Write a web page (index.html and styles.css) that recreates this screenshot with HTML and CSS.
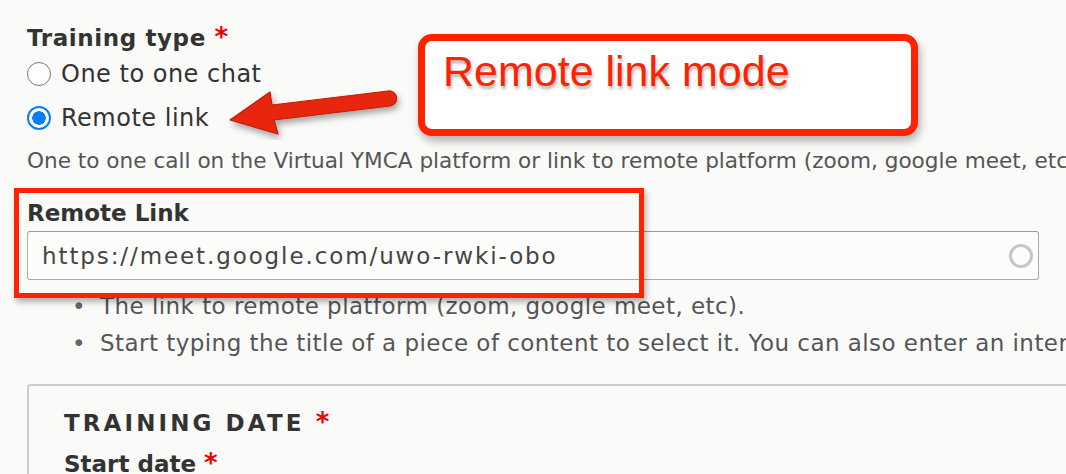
FILE: index.html
```html
<!DOCTYPE html>
<html>
<head>
<meta charset="utf-8">
<link rel="stylesheet" href="styles.css">
</head>
<body>
<div class="page">
  <div class="field">
    <div class="label label-first">Training type <span class="req">*</span></div>
    <label class="radio"><span class="dot"></span><span>One to one chat</span></label>
    <label class="radio"><span class="dot checked"></span><span>Remote link</span></label>
    <div class="desc">One to one call on the Virtual YMCA platform or link to remote platform (zoom, google meet, etc).</div>
  </div>

  <div class="field link-field">
    <div class="label tight">Remote Link</div>
    <div class="input">
      <span class="value">https://meet.google.com/uwo-rwki-obo</span>
      <span class="throbber"></span>
    </div>
    <ul class="help">
      <li>The link to remote platform (zoom, google meet, etc).</li>
      <li>Start typing the title of a piece of content to select it. You can also enter an internal path.</li>
    </ul>
  </div>

  <div class="fieldset">
    <div class="legend">TRAINING DATE <span class="req">*</span></div>
    <div class="label tight">Start date <span class="req">*</span></div>
  </div>
</div>

<div class="highlight"></div>
<div class="callout">Remote link mode</div>
<svg class="arrow" width="200" height="70" viewBox="0 0 200 70">
  <defs>
    <filter id="sh" x="-20%" y="-40%" width="140%" height="180%">
      <feDropShadow dx="2" dy="4" stdDeviation="3" flood-color="#000" flood-opacity="0.35"/>
    </filter>
  </defs>
  <path d="M8 50 L48 22 L50 35 L166 21 C176 20 178 34 168 36 L52 50 L56 64 Z" fill="#e8250c" stroke="#c11d05" stroke-width="1.2" stroke-linejoin="round" filter="url(#sh)"/>
</svg>
</body>
</html>
```
FILE: styles.css
```css
html, body {
  margin: 0;
  padding: 0;
  background: #fafaf9;
  overflow: hidden;
}
body {
  width: 1066px;
  height: 474px;
  position: relative;
  font-family: "DejaVu Sans", Verdana, sans-serif;
  color: #333;
}
.page {
  padding: 24px 0 0 27px;
  white-space: nowrap;
}
.label {
  font-size: 23px;
  font-weight: bold;
  letter-spacing: 0.6px;
  line-height: 30px;
  color: #333;
}
.label-first {
  line-height: 27px;
}
.label.tight {
  letter-spacing: 0;
}
.req {
  color: #e00;
  font-size: 26px;
  letter-spacing: 0;
}
.radio {
  display: flex;
  align-items: center;
  gap: 10px;
  font-size: 24px;
  letter-spacing: 0.5px;
  line-height: 30px;
  height: 44px;
  color: #333;
}
.dot {
  width: 24px;
  height: 24px;
  border: 1.5px solid #777;
  border-radius: 50%;
  background: #fff;
  box-sizing: border-box;
  flex: none;
}
.dot.checked {
  border: 2px solid #0a7cff;
  background: radial-gradient(circle, #0a7cff 0 6.5px, #fff 7px);
}
.desc {
  margin-top: 8px;
  font-size: 21.6px;
  line-height: 26px;
  color: #555;
}
.link-field {
  margin-top: 24px;
}
.input {
  display: flex;
  align-items: center;
  justify-content: space-between;
  width: 1012px;
  height: 49px;
  box-sizing: border-box;
  border: 1.5px solid #aaa;
  border-top-color: #999;
  border-radius: 3px;
  background: #fcfcfa;
  padding: 0 5px 0 14px;
  margin-top: 3px;
}
.value {
  font-size: 23px;
  letter-spacing: 1.9px;
  color: #444;
}
.throbber {
  width: 18px;
  height: 18px;
  border: 3px solid #c6c6c6;
  border-radius: 50%;
}
.help {
  list-style: none;
  margin: 8px 0 0;
  padding-left: 45px;
  font-size: 23px;
  letter-spacing: 0.45px;
  line-height: 37px;
  color: #555;
}
.help li::before {
  content: "•";
  display: inline-block;
  width: 28px;
  color: #666;
  letter-spacing: 0;
}
.fieldset {
  margin-top: 22px;
  border: 2px solid #ccc;
  border-right: none;
  border-bottom: none;
  border-radius: 4px 0 0 0;
  padding: 21px 0 0 35px;
  height: 80px;
}
.legend {
  font-size: 23px;
  font-weight: bold;
  letter-spacing: 3.1px;
  line-height: 30px;
  margin-bottom: 10px;
}
.highlight {
  position: absolute;
  left: 14px;
  top: 188px;
  width: 630px;
  height: 110px;
  box-sizing: border-box;
  border: 5px solid #ff2200;
  box-shadow: 2px 4px 6px rgba(0,0,0,0.3);
}
.callout {
  position: absolute;
  left: 418px;
  top: 34px;
  width: 500px;
  height: 102px;
  box-sizing: border-box;
  border: 7px solid #ff2200;
  border-radius: 14px;
  background: #fff;
  box-shadow: 2px 5px 8px rgba(0,0,0,0.3);
  padding: 5px 0 0 18px;
  font-family: "Liberation Sans", Arial, sans-serif;
  font-size: 43px;
  line-height: 50px;
  color: #ff2200;
  text-shadow: 1px 3px 3px rgba(0,0,0,0.3);
}
.arrow {
  position: absolute;
  left: 222px;
  top: 70px;
}
```
